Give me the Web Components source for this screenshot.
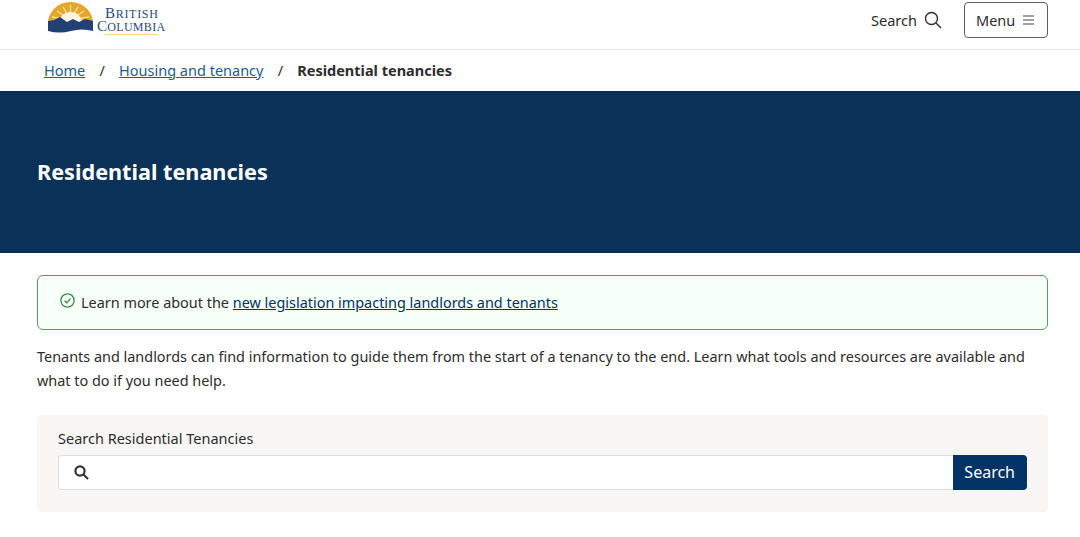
<!DOCTYPE html>
<html lang="en">
<head>
<meta charset="utf-8">
<title>Residential tenancies</title>
<style>
  html, body { margin: 0; padding: 0; background: #fff; }
  body { font-family: "Noto Sans", "Open Sans", sans-serif; color: #2d2d2d; font-size: 14.43px; overflow: hidden; height: 537px; }
</style>
</head>
<body>
<bc-header></bc-header>
<bc-breadcrumb>
  <a href="#">Home</a>
  <a href="#">Housing and tenancy</a>
  <b>Residential tenancies</b>
</bc-breadcrumb>
<bc-hero>Residential tenancies</bc-hero>
<bc-content>
  <bc-alert>Learn more about the <a href="#" style="color:#013366">new legislation impacting landlords and tenants</a></bc-alert>
  <p style="margin:0;line-height:24.6px;padding-top:14.6px">Tenants and landlords can find information to guide them from the start of a tenancy to the end. Learn what tools and resources are available and what to do if you need help.</p>
  <bc-search label="Search Residential Tenancies"></bc-search>
</bc-content>

<script>
class BcHeader extends HTMLElement {
    connectedCallback() {
        this.attachShadow({ mode: 'open' });
        this.shadowRoot.innerHTML = `
            <style>
                :host { display: block; height: 49px; border-bottom: 1px solid #e4e4e4; }
                .bar { display: flex; justify-content: space-between; align-items: flex-start; height: 100%; padding: 2px 32px 0 48px; box-sizing: border-box; }
                .logo { display: flex; align-items: flex-start; }
                .wordmark { font-family: "Liberation Serif", serif; color: #2a4a7d; font-size: 12px; line-height: 12px; margin: 5px 0 0 3px; }
                .wordmark span { display: block; letter-spacing: .3px; }
                .wordmark span::first-letter { font-size: 15px; }
                .wordmark .t { padding-left: 8px; letter-spacing: .7px; }
                .wordmark i { display: block; width: 53px; height: 1px; background: #f3d68c; margin: 1px 0 0 8px; }
                .tools { display: flex; align-items: center; height: 36px; }
                .search { display: flex; align-items: center; gap: 7px; color: #2d2d2d; font-size: 14.5px; margin-right: 22px; }
                .menu { display: flex; align-items: center; gap: 8px; box-sizing: border-box; width: 84px; height: 36px; padding: 0 11px; border: 1px solid #606060; border-radius: 4px; font-size: 14.5px; }
            </style>
            <div class="bar">
                <div class="logo">
                    <svg width="46" height="32" viewBox="0 0 46 32">
                        <path d="M0 21 A22.5 21 0 0 1 45 21 Z" fill="#e3a82b"/>
                        <g stroke="#f6dc9c" stroke-width="1.4">
                            <path d="M22.5 18 L22.5 3M22.5 18 L15 5M22.5 18 L30 5M22.5 18 L9 9M22.5 18 L36 9M22.5 18 L4 15M22.5 18 L41 15"/>
                        </g>
                        <path d="M11 21 A11.5 11 0 0 1 34 21 Z" fill="#fdf6e0"/>
                        <path d="M0 19 L6 18 L12 15 L19 20 L25 17 L31 20 L37 17 L45 19 L45 29 Q34 26 23 29 Q11 32 0 29 Z" fill="#234075"/>
                    </svg>
                    <div class="wordmark"><span class="t">BRITISH</span><span>COLUMBIA</span><i></i></div>
                </div>
                <div class="tools">
                    <div class="search">Search
                        <svg width="18" height="18" viewBox="0 0 18 18" fill="none" stroke="#2d2d2d" stroke-width="1.4"><circle cx="7.5" cy="7.5" r="6"/><path d="M12 12 L17 17"/></svg>
                    </div>
                    <div class="menu">Menu
                        <svg width="11" height="10" viewBox="0 0 11 10" stroke="#444" stroke-width="1.1"><path d="M0 1H11M0 5H11M0 9H11"/></svg>
                    </div>
                </div>
            </div>
        `;
    }
}

class BcBreadcrumb extends HTMLElement {
    connectedCallback() {
        this.attachShadow({ mode: 'open' });
        // separators are drawn from the light children so the markup stays a plain list
        const items = [...this.children];
        this.shadowRoot.innerHTML = `
            <style>
                :host { display: block; height: 41px; }
                nav { display: flex; align-items: center; height: 39px; padding-left: 44px; font-size: 14.5px; }
                a { color: #255a90; }
                b { font-weight: 700; color: #2d2d2d; }
                .sep { margin: 0 14.2px; color: #2d2d2d; }
            </style>
            <nav></nav>
        `;
        const nav = this.shadowRoot.querySelector('nav');
        items.forEach((item, i) => {
            if (i) {
                const sep = document.createElement('span');
                sep.className = 'sep';
                sep.textContent = '/';
                nav.appendChild(sep);
            }
            nav.appendChild(item.cloneNode(true));
        });
    }
}

class BcHero extends HTMLElement {
    connectedCallback() {
        this.attachShadow({ mode: 'open' });
        this.shadowRoot.innerHTML = `
            <style>
                :host { display: flex; align-items: center; box-sizing: border-box; height: 162px; padding: 0 0 2px 37px; background: #0a3157; color: #fff; font-size: 21.65px; font-weight: 700; }
            </style>
            <slot></slot>
        `;
    }
}

class BcContent extends HTMLElement {
    connectedCallback() {
        this.attachShadow({ mode: 'open' });
        this.shadowRoot.innerHTML = `
            <style>
                :host { display: block; padding: 22px 32px 0 37px; }
            </style>
            <slot></slot>
        `;
    }
}

class BcAlert extends HTMLElement {
    connectedCallback() {
        this.attachShadow({ mode: 'open' });
        this.shadowRoot.innerHTML = `
            <style>
                :host { display: flex; align-items: center; gap: 6.5px; box-sizing: border-box; height: 55px; padding: 0 21.5px; background: #f6fff8; border: 1px solid #5b9a6b; border-radius: 6px; }
                svg { margin-top: -4px; flex: none; }
            </style>
            <svg width="15" height="15" viewBox="0 0 15 15" fill="none" stroke="#3c8a4e" stroke-width="1.3"><circle cx="7.5" cy="7.5" r="6.6"/><path d="M4.6 7.7 L6.7 9.8 L10.5 5.6"/></svg>
            <div><slot></slot></div>
        `;
    }
}

class BcSearch extends HTMLElement {
    connectedCallback() {
        this.attachShadow({ mode: 'open' });
        this.shadowRoot.innerHTML = `
            <style>
                :host { display: block; box-sizing: border-box; height: 97px; margin-top: 21.2px; padding: 13px 21px 0; background: #f9f7f6; border-radius: 4px; }
                label { display: block; font-size: 14.5px; line-height: 20px; margin-bottom: 7px; }
                .row { display: flex; height: 35px; }
                .field { flex: 1; display: flex; align-items: center; padding-left: 15px; box-sizing: border-box; background: #fff; border: 1px solid #e0dedc; border-right: 0; border-radius: 4px 0 0 4px; }
                .go { display: flex; align-items: center; padding: 0 12px 0 11px; background: #013366; color: #fff; font-size: 16px; border-radius: 0 4px 4px 0; }
            </style>
            <label></label>
            <div class="row">
                <div class="field">
                    <svg width="15" height="15" viewBox="0 0 15 15" fill="none" stroke="#333" stroke-width="2.2"><circle cx="6" cy="6" r="4.6"/><path d="M9.5 9.5 L14 14"/></svg>
                </div>
                <div class="go">Search</div>
            </div>
        `;
        this.shadowRoot.querySelector('label').textContent = this.getAttribute('label');
    }
}

customElements.define('bc-header', BcHeader);
customElements.define('bc-breadcrumb', BcBreadcrumb);
customElements.define('bc-hero', BcHero);
customElements.define('bc-content', BcContent);
customElements.define('bc-alert', BcAlert);
customElements.define('bc-search', BcSearch);
</script>
</body>
</html>
